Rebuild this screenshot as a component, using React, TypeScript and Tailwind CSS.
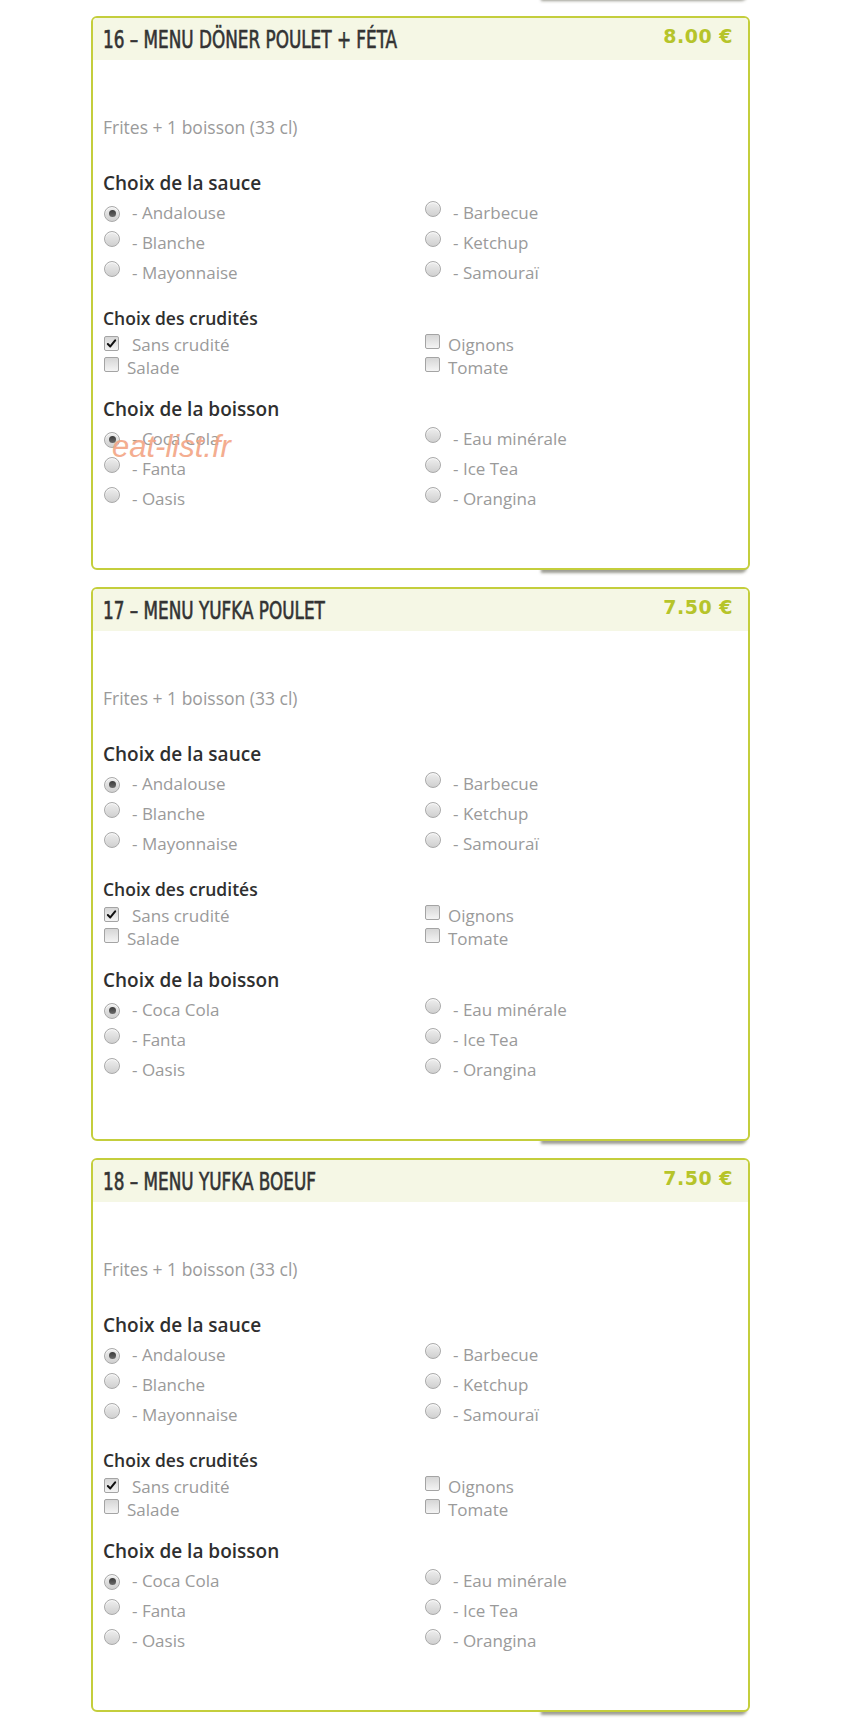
import React from "react";

type Opt = { label: string; checked?: boolean };

const body = "font-['Trebuchet_MS','Open_Sans',sans-serif]";

function Radio({ checked }: { checked?: boolean }) {
  return (
    <span className="relative inline-flex h-[16px] w-[16px] shrink-0 items-center justify-center rounded-full border border-[#a9a9a9] bg-gradient-to-b from-[#eeeeee] to-[#d0d0d0] shadow-[inset_0_1px_1px_rgba(255,255,255,0.8)]">
      {checked && <span className="h-[7px] w-[7px] rounded-full bg-gradient-to-b from-[#3c3c3c] to-[#6a6a6a]" />}
    </span>
  );
}

function Check({ checked }: { checked?: boolean }) {
  return (
    <span className="relative inline-flex h-[15px] w-[15px] shrink-0 items-center justify-center rounded-[2px] border border-[#a4a4a4] bg-gradient-to-b from-[#d6d6d6] to-[#f4f4f4]">
      {checked && (
        <svg viewBox="0 0 12 12" className="h-[11px] w-[11px]">
          <path d="M2 6.5 L4.7 9.2 L10 2.6" fill="none" stroke="#111" strokeWidth="2.2" strokeLinecap="round" strokeLinejoin="round" />
        </svg>
      )}
    </span>
  );
}

function RadioGrid({ items }: { items: Opt[] }) {
  // items are listed column-wise: first three on the left, last three on the right
  const rows = [0, 1, 2].map((i) => [items[i], items[i + 3]]);
  return (
    <div className="mt-[3px] flex flex-col">
      {rows.map((pair, i) => (
        <div key={i} className="grid h-[30px] grid-cols-[321px_1fr] items-center">
          {pair.map((o, j) => (
            <div key={j} className="flex items-center">
              <span className="ml-[1px] -mt-[4px]">
                <Radio checked={o.checked} />
              </span>
              <span className="ml-[12px] text-[17px] leading-[24px] text-[#9a9a9a]">- {o.label}</span>
            </div>
          ))}
        </div>
      ))}
    </div>
  );
}

function CheckItem({ label, checked, gap }: { label: string; checked?: boolean; gap: string }) {
  return (
    <div className="flex h-[23px] items-center">
      <span className="ml-[1px] -mt-[4px]">
        <Check checked={checked} />
      </span>
      <span className={`${gap} text-[17px] leading-[22px] text-[#9a9a9a]`}>{label}</span>
    </div>
  );
}

function Crudites() {
  return (
    <div className="mt-[4px] grid grid-cols-[321px_1fr]">
      <div className="flex flex-col">
        <CheckItem label="Sans crudité" checked gap="ml-[13px]" />
        <CheckItem label="Salade" gap="ml-[8px]" />
      </div>
      <div className="flex flex-col">
        <CheckItem label="Oignons" gap="ml-[8px]" />
        <CheckItem label="Tomate" gap="ml-[8px]" />
      </div>
    </div>
  );
}

const sauces: Opt[] = [
  { label: "Andalouse", checked: true },
  { label: "Blanche" },
  { label: "Mayonnaise" },
  { label: "Barbecue" },
  { label: "Ketchup" },
  { label: "Samouraï" },
];

const boissons: Opt[] = [
  { label: "Coca Cola", checked: true },
  { label: "Fanta" },
  { label: "Oasis" },
  { label: "Eau minérale" },
  { label: "Ice Tea" },
  { label: "Orangina" },
];

function CardShadow() {
  return (
    <div className="absolute bottom-0 right-[3px] h-[12px] w-[206px] rounded-br-[6px] shadow-[0_3px_3px_rgba(60,60,40,0.5)]" />
  );
}

function MenuCard({ title, price, mark }: { title: string; price: string; mark?: boolean }) {
  return (
    <div className="relative ml-[91px] w-[659px]">
      <CardShadow />
      <div className={`relative h-[554px] rounded-[6px] border-2 border-[#c4ce3c] bg-white ${body}`}>
        <div className="flex h-[42px] items-start justify-between rounded-t-[4px] bg-[#f5f7e5] pl-[10px] pr-[15px]">
          <h2 className="mt-[7px] origin-left scale-x-[0.78] whitespace-nowrap font-['DejaVu_Sans_Condensed','DejaVu_Sans',sans-serif] text-[24px] leading-[30px] text-[#333333] [-webkit-text-stroke:0.6px_#333333]">
            {title}
          </h2>
          <span className="mt-[5px] whitespace-nowrap font-['DejaVu_Sans',sans-serif] text-[19px] font-bold leading-[26px] tracking-[0.5px] text-[#b6c42a]">
            {price}
          </span>
        </div>
        <div className="pl-[10px]">
          <p className="mt-[56px] text-[17.5px] leading-[22px] text-[#9a9a9a]">Frites + 1 boisson (33 cl)</p>
          <h3 className="mt-[33px] text-[19px] font-semibold leading-[24px] text-[#2f2f2f]">Choix de la sauce</h3>
          <RadioGrid items={sauces} />
          <h3 className="mt-[19px] text-[17.5px] font-semibold leading-[22px] text-[#2f2f2f]">Choix des crudités</h3>
          <Crudites />
          <h3 className="mt-[18px] text-[19px] font-semibold leading-[24px] text-[#2f2f2f]">Choix de la boisson</h3>
          <div className="relative">
            <RadioGrid items={boissons} />
            {mark && (
              <span className="pointer-events-none absolute left-[9px] top-[6px] font-['Liberation_Sans',sans-serif] text-[31px] italic leading-[34px] text-[#f3a584] opacity-90">
                eat-list.fr
              </span>
            )}
          </div>
        </div>
      </div>
    </div>
  );
}

export default function App() {
  return (
    <div className="min-h-[1721px] w-[850px] overflow-hidden bg-white">
      <div className="relative h-0">
        <div className="absolute left-[91px] top-[-14px] h-[12px] w-[659px]">
          <CardShadow />
        </div>
      </div>
      <div className="flex flex-col gap-[17px] pt-[16px]">
        <MenuCard title="16 – MENU DÖNER POULET + FÉTA" price="8.00 €" mark />
        <MenuCard title="17 – MENU YUFKA POULET" price="7.50 €" />
        <MenuCard title="18 – MENU YUFKA BOEUF" price="7.50 €" />
      </div>
    </div>
  );
}
